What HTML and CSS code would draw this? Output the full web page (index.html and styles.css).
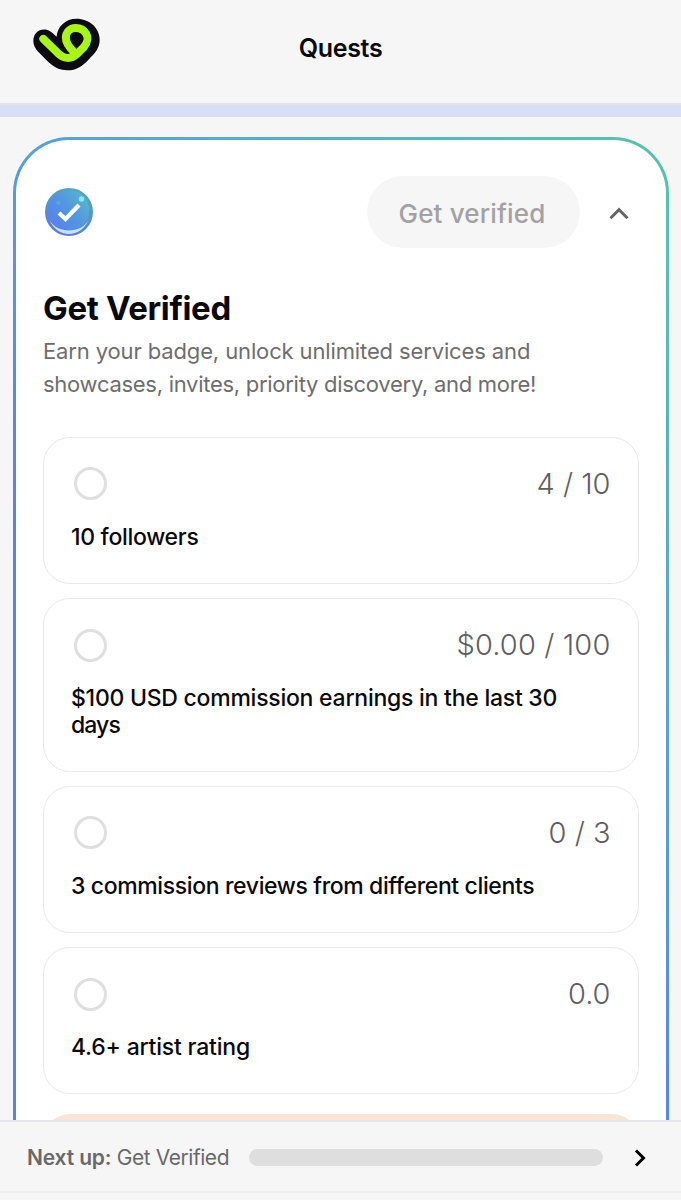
FILE: index.html
```html
<!DOCTYPE html>
<html lang="en">
<head>
<meta charset="utf-8">
<title>Quests</title>
<link rel="stylesheet" href="styles.css">
</head>
<body>
<div class="app">
  <header class="topbar">
    <svg class="logo" viewBox="39 55 202 158" aria-hidden="true">
      <path fill="#0c0b12" d="M72 89C86 89 97 97 110 111C112 79 138 56 170 56C209 56 240 84 240 119C240 146 226 160 207 179C188 199 169 212 143 212C115 212 99 200 79 181L54 155C45 145 40 136 40 123C40 103 54 89 72 89Z"/>
      <path class="logo-line" d="M70 117L112 158C131 178 153 180 171 163L193 141C205 127 205 111 199 101C193 90 182 84 168 84C149 84 138 98 138 114C138 131 150 145 163 157"/>
    </svg>
    <h1 class="title">Quests</h1>
  </header>
  <div class="stripe"></div>
  <main class="content">
    <section class="quest">
      <div class="quest-inner">
        <div class="quest-head">
          <svg class="badge" viewBox="0 0 48 48" aria-hidden="true">
            <defs>
              <linearGradient id="rim" x1=".7" y1="0" x2=".4" y2="1"><stop offset="0" stop-color="#56a5b9"/><stop offset=".55" stop-color="#5490d0"/><stop offset="1" stop-color="#5c7bdc"/></linearGradient>
              <linearGradient id="face" x1=".9" y1=".2" x2=".2" y2=".75"><stop offset="0" stop-color="#56b4cd"/><stop offset=".5" stop-color="#5398df"/><stop offset="1" stop-color="#5586ec"/></linearGradient>
            </defs>
            <circle cx="24" cy="24" r="24" fill="url(#rim)"/>
            <circle cx="24" cy="22.5" r="20.5" fill="url(#face)"/>
            <path d="M4.5 32C12 50.5 36 50.5 43.5 32C36 46 12 46 4.5 32Z" fill="#c5e2fa"/>
            <circle cx="36.5" cy="11" r="2.7" fill="#87e9f5"/>
            <circle cx="13.5" cy="15" r="2.3" fill="#54a8dc"/>
            <path d="M14 25L20.5 31L34 17" fill="none" stroke="#fff" stroke-width="4.2"/>
          </svg>
          <button class="verify" type="button">Get verified</button>
          <svg class="chevron-up" viewBox="0 0 20 13" aria-hidden="true"><path d="M1.5 11.2L10 2.7L18.5 11.2"/></svg>
        </div>
        <h2 class="quest-title">Get Verified</h2>
        <p class="desc"><span class="desc-one">Earn your badge, unlock unlimited services and</span><br><span class="desc-two">showcases, invites, priority discovery, and more!</span></p>
        <div class="tasks">
          <article class="task">
            <div class="task-top"><i class="ring"></i><span class="count">4 / 10</span></div>
            <p class="task-name name-a">10 followers</p>
          </article>
          <article class="task task-tall">
            <div class="task-top"><i class="ring"></i><span class="count count-wide">$0.00 / 100</span></div>
            <p class="task-name name-b">$100 USD commission earnings in the last 30<br><span class="name-tail">days</span></p>
          </article>
          <article class="task">
            <div class="task-top"><i class="ring"></i><span class="count">0 / 3</span></div>
            <p class="task-name name-c">3 commission reviews from different clients</p>
          </article>
          <article class="task">
            <div class="task-top"><i class="ring"></i><span class="count">0.0</span></div>
            <p class="task-name name-d">4.6+ artist rating</p>
          </article>
        </div>
        <div class="notice"></div>
      </div>
    </section>
  </main>
  <footer class="bottom">
    <div class="next">
      <p class="next-label"><b>Next up:</b> Get Verified</p>
      <div class="progress"></div>
      <svg class="chevron-right" viewBox="0 0 12 18" aria-hidden="true"><path d="M2 1.5L9.5 9L2 16.5"/></svg>
    </div>
  </footer>
</div>
</body>
</html>
```

FILE: styles.css
```css
* { box-sizing: border-box; }
body { margin: 0; background: #f6f6f6; color: #09090b; font-family: Inter, "Liberation Sans", sans-serif; }
h1, h2, p { margin: 0; }
.app { height: 1200px; display: flex; flex-direction: column; overflow: hidden; }

.topbar { flex: none; height: 105px; border-bottom: 2px solid #e1e1ec; display: grid; grid-template-columns: 1fr auto 1fr; padding: 0 33px; }
.logo { width: 67px; height: 53px; margin-top: 18px; }
.logo-line { fill: none; stroke: #a9f513; stroke-width: 24; stroke-linecap: round; stroke-linejoin: round; }
.title { font-size: 25px; line-height: 30px; font-weight: 600; letter-spacing: -.3px; margin-top: 33px; white-space: nowrap; }
.stripe { flex: none; height: 12px; background: #d7dff4; }

.content { flex: 1; min-height: 0; overflow: hidden; padding: 20px 12px 0 13px; }
.quest { height: 1330px; border-radius: 56px; padding: 3px; background: linear-gradient(225deg, #54c1a8 0%, #54c1b0 5%, #559fdc 33%, #548aee 46%, #5980f0 54%, #5b80ee 100%); }
.quest-inner { height: 100%; border-radius: 53px; background: #fff; padding: 36px 27px 0; }
.quest-head { height: 72px; display: flex; align-items: center; padding-left: 2px; }
.badge { width: 48px; height: 48px; }
.verify { margin-left: auto; width: 213px; height: 72px; border: 0; border-radius: 36px; background: #f6f6f6; color: #a3a1a4; font: 500 26px/36px Inter, sans-serif; letter-spacing: .15px; padding: 4px 2px 0 0; white-space: nowrap; }
.chevron-up { width: 20px; height: 13px; margin: 2px 10px 0 29.5px; fill: none; stroke: #666; stroke-width: 3; }
.quest-title { margin-top: 40px; font-size: 33px; line-height: 40px; font-weight: 700; letter-spacing: -.35px; white-space: nowrap; }
.desc { margin-top: 7px; font-size: 22px; line-height: 33px; color: #6d6d70; white-space: nowrap; }
.desc-one { letter-spacing: -.13px; }
.desc-two { letter-spacing: -.28px; }

.tasks { margin-top: 35.6px; display: flex; flex-direction: column; gap: 14px; }
.task { height: 147.4px; border: 1.5px solid #e9e8ea; border-radius: 27px; padding: 28.4px 27.5px 0 27px; }
.task-tall { height: 173.6px; }
.task-top { height: 36px; display: flex; align-items: center; justify-content: space-between; }
.ring { width: 33px; height: 33px; margin-left: 3px; border: 3px solid #dfdee0; border-radius: 50%; }
.count { font-size: 29px; line-height: 36px; font-weight: 300; color: #5e5e63; white-space: nowrap; }
.count-wide { letter-spacing: .15px; }
.task-name { margin-top: 22px; font-size: 23px; line-height: 27px; font-weight: 500; white-space: nowrap; }
.name-a { letter-spacing: -.3px; }
.name-b { letter-spacing: -.25px; }
.name-tail { letter-spacing: -.9px; }
.name-c { letter-spacing: -.37px; }
.name-d { letter-spacing: -.2px; }
.notice { height: 150px; margin-top: 20px; border-radius: 27px; background: #fae4d5; }

.bottom { flex: none; height: 80px; border-top: 2px solid #e6e5e9; }
.next { height: 71px; border-bottom: 2px solid #ececee; display: flex; align-items: center; padding: 2px 35px 0 27px; }
.next-label { width: 222px; font-size: 21px; line-height: 28px; letter-spacing: -.45px; padding-top: 1px; color: #69696c; white-space: nowrap; }
.next-label b { font-weight: 600; letter-spacing: -.15px; }
.progress { width: 354px; height: 17px; border-radius: 9px; background: #dedede; }
.chevron-right { width: 12px; height: 18px; margin-left: 31px; fill: none; stroke: #000; stroke-width: 3; }
```
